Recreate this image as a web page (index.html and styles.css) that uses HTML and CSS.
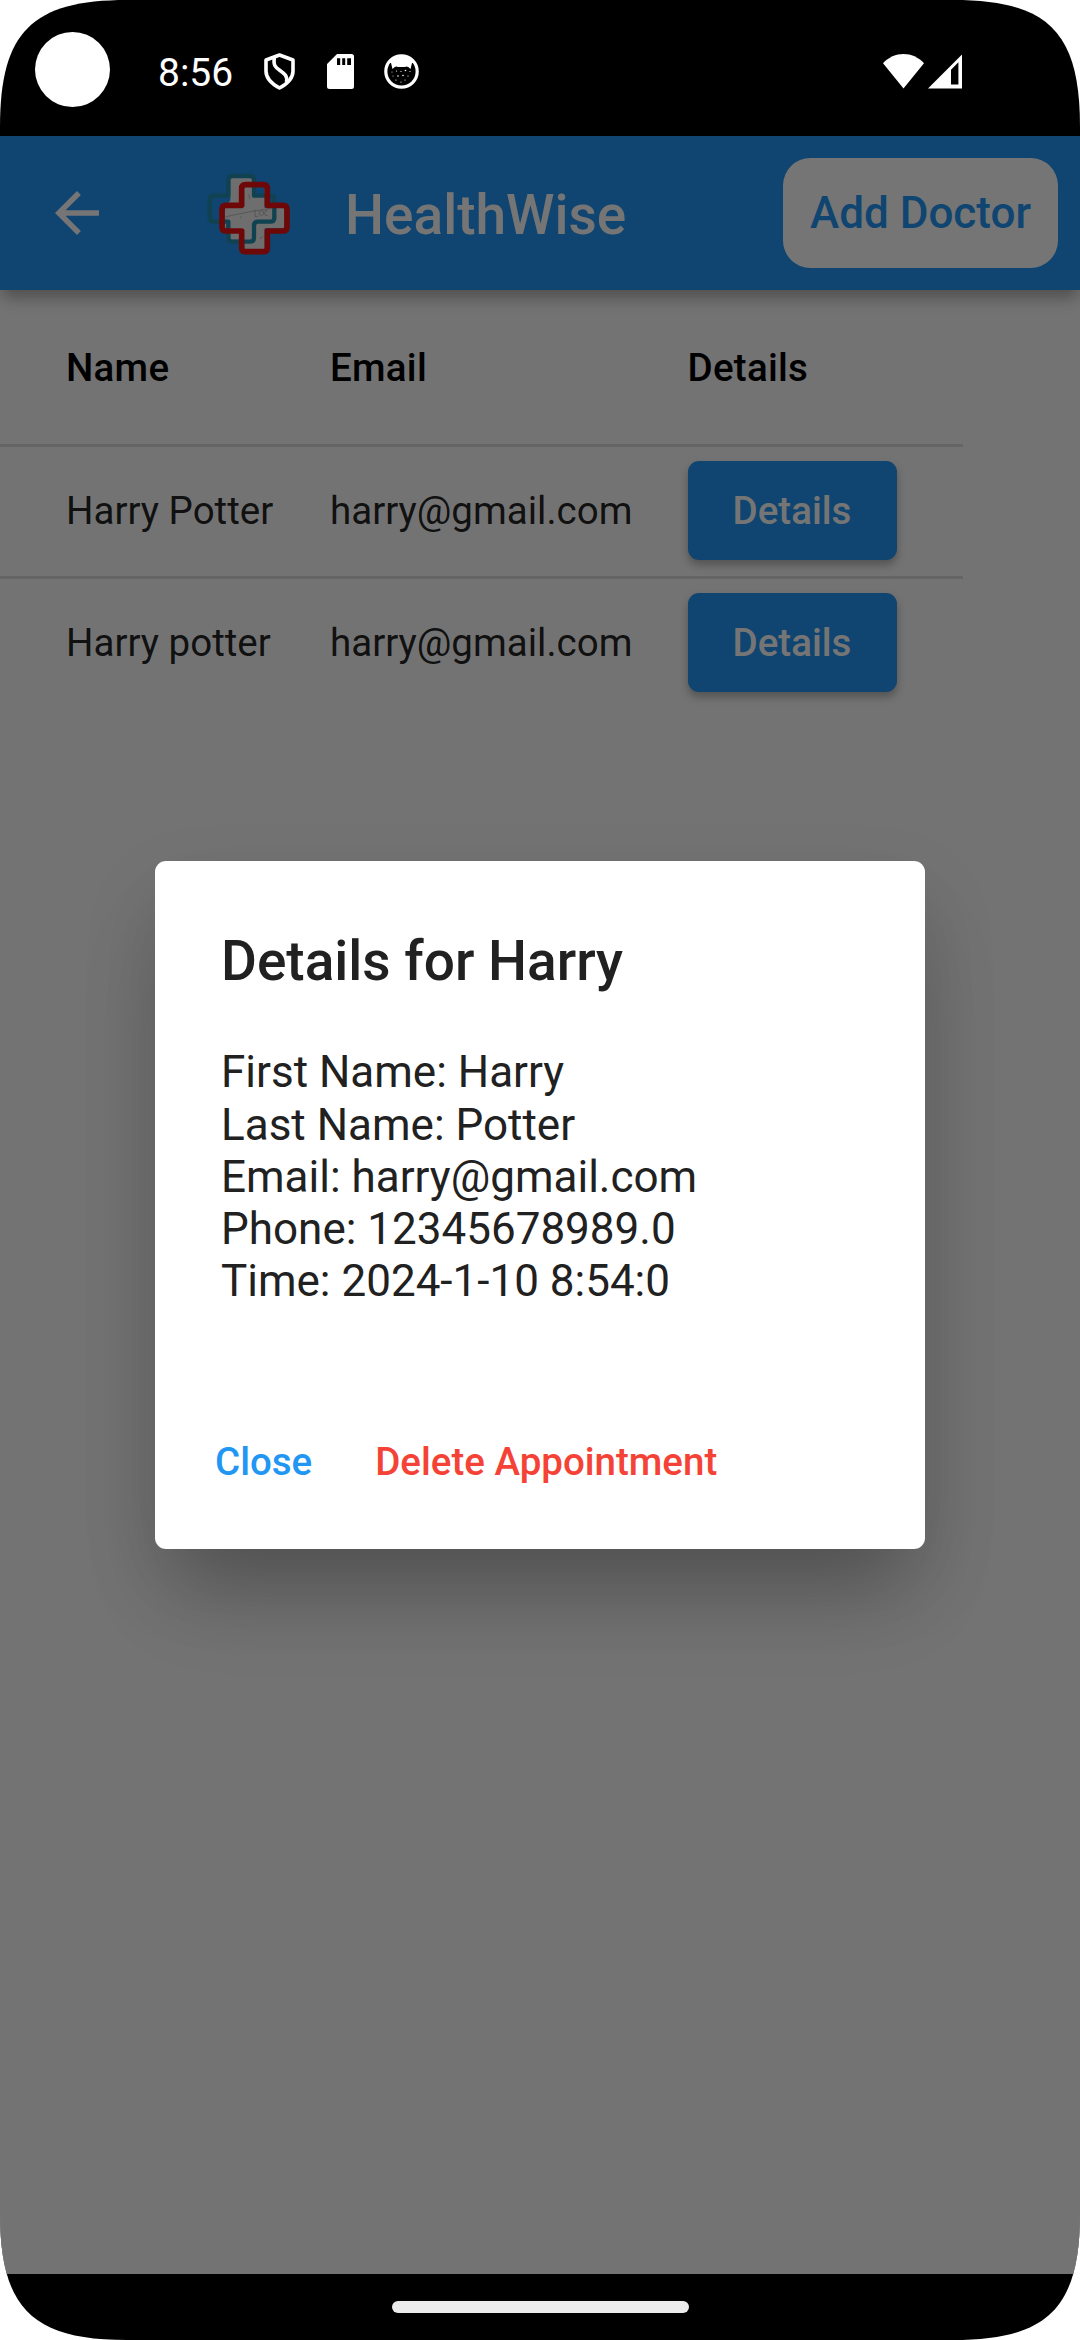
FILE: index.html
```html
<!DOCTYPE html>
<html lang="en">
<head>
<meta charset="utf-8">
<title>HealthWise</title>
<link rel="stylesheet" href="styles.css">
</head>
<body>
<div class="device">
  <header class="status">
    <span class="camera"></span>
    <time class="clock">8:56</time>
    <div class="notices">
      <svg class="shield" viewBox="0 0 31 37"><path d="M15.500 2L29 7V18C29 25 23 31 15.500 35C8 31 2 25 2 18V7Z" fill="none" stroke="#fff" stroke-width="3.600" stroke-linejoin="round"/><path d="M10.500 4C9 12 11 14 16 17.500C21 21 23.500 23 22.500 29" fill="none" stroke="#fff" stroke-width="3.600"/></svg>
      <svg class="card" viewBox="0 0 27 35"><path fill="#fff" fill-rule="evenodd" d="M10 0H24.500Q27 0 27 2.500V32.500Q27 35 24.500 35H2.500Q0 35 0 32.500V10ZM10 4.200V11H13.200V4.200ZM15.200 4.200V11H18.200V4.200ZM20.200 4.200V11H24V4.200Z"/></svg>
      <svg class="cat" viewBox="0 0 35 35"><circle cx="17.500" cy="17.500" r="15.700" fill="none" stroke="#fff" stroke-width="3.200"/><path fill="#fff" d="M4 9C8 1 27 1 31 9L28 9L26.500 15Q23 11.500 21 13H14Q12 11.500 8.500 15L7 9Z"/><g fill="#fff"><circle cx="8" cy="18" r=".5"/><circle cx="12.500" cy="17" r=".6"/><circle cx="17" cy="17.500" r=".6"/><circle cx="21.500" cy="16.500" r=".8"/><circle cx="26" cy="17.500" r=".6"/><circle cx="9" cy="22" r=".5"/><circle cx="14" cy="22" r=".8"/><circle cx="19" cy="21.500" r=".8"/><circle cx="24" cy="22" r=".6"/><circle cx="12" cy="26" r=".6"/><circle cx="17" cy="28" r=".6"/><circle cx="21" cy="26" r=".6"/></g></svg>
    </div>
    <div class="signals">
      <svg class="wifi" viewBox="0 0 41 35"><path fill="#fff" d="M0 9.300C11 -3.100 30 -3.100 41 9.300L20.500 34.500Z"/></svg>
      <svg class="cell" viewBox="0 0 35 35"><path fill="#fff" fill-rule="evenodd" d="M35 0V35H0ZM31.300 8L23.700 15.600V31H31.300Z"/></svg>
    </div>
  </header>

  <div class="app">
    <div class="appbar">
      <svg class="back" viewBox="0 0 24 24"><path fill="#fff" d="M20 11H7.830l5.590-5.590L12 4l-8 8 8 8 1.410-1.410L7.830 13H20v-2z"/></svg>
      <svg class="logo" viewBox="0 -22 300 300">
        <path fill="#f0f0f0" d="M91 23H156V50H194V113H253V174H194V236H133V208H91V174H74V113L91 90Z"/>
        <path fill="#2196f3" d="M166 50H194V72H166Z"/>
        <path class="cross cross-blue" d="M97 17H150Q162 17 162 29V76H211Q223 76 223 88V142Q223 154 211 154H174Q162 154 162 166V202Q162 214 150 214H97Q85 214 85 202V154H41Q29 154 29 142V88Q29 76 41 76H85V29Q85 17 97 17Z"/>
        <path class="sketch" d="M76 140Q120 128 214 114M146 72L150 86M165 118V138H174M203 120Q195 118 194 128Q194 138 203 136M120 138L125 142M180 205L190 198"/>
        <circle class="sketch" cx="184" cy="128" r="7"/>
        <path class="cross cross-red" d="M137 43H190Q202 43 202 55V105H249Q261 105 261 117V170Q261 182 249 182H202V232Q202 244 190 244H137Q125 244 125 232V182H78Q66 182 66 170V117Q66 105 78 105H125V55Q125 43 137 43Z"/>
      </svg>
      <h1 class="title">HealthWise</h1>
      <button class="add">Add Doctor</button>
    </div>

    <div class="table">
      <div class="row head"><span>Name</span><span>Email</span><span>Details</span></div>
      <div class="row"><span>Harry Potter</span><span>harry@gmail.com</span><button class="details">Details</button></div>
      <div class="row"><span>Harry potter</span><span>harry@gmail.com</span><button class="details">Details</button></div>
    </div>

    <div class="scrim">
      <section class="dialog">
        <h2 class="dialog-title">Details for Harry</h2>
        <div class="dialog-body">
          <p>First Name: Harry</p>
          <p>Last Name: Potter</p>
          <p>Email: harry@gmail.com</p>
          <p>Phone: 12345678989.0</p>
          <p>Time: 2024-1-10 8:54:0</p>
        </div>
        <div class="actions">
          <button class="action close">Close</button>
          <button class="action delete">Delete Appointment</button>
        </div>
      </section>
    </div>
  </div>

  <footer class="navbar"><span class="pill"></span></footer>
</div>
</body>
</html>
```

FILE: styles.css
```css
* { box-sizing: border-box; margin: 0; padding: 0; }

body {
  width: 1080px;
  height: 2340px;
  background: #fff;
  font-family: Roboto, sans-serif;
  overflow: hidden;
}

button { border: 0; font-family: inherit; white-space: nowrap; }
svg { display: block; flex: none; }

.device {
  width: 1080px;
  height: 2340px;
  display: flex;
  flex-direction: column;
  background: #000;
  clip-path: path("M0 127C0 32 32 0 127 0H953C1048 0 1080 32 1080 127V2213C1080 2308 1048 2340 953 2340H127C32 2340 0 2308 0 2213Z");
}

/* Status bar */
.status {
  height: 136px;
  flex: none;
  display: flex;
  align-items: center;
  padding: 7px 118px 0 35px;
}
.camera { width: 75px; height: 75px; margin-top: -4px; border-radius: 50%; background: #fff; }
.clock { width: 106px; margin-left: 48px; color: #fff; font-size: 39px; line-height: 46px; padding-top: 3px; }
.notices { display: flex; align-items: center; gap: 31px; }
.shield { width: 31px; height: 37px; }
.card { width: 27px; height: 35px; margin-left: 1px; }
.cat { width: 35px; height: 35px; margin-left: -1px; }
.signals { display: flex; align-items: center; gap: 4px; margin-left: auto; }
.wifi { width: 41px; height: 35px; }
.cell { width: 34px; height: 35px; }

/* Application area */
.app { position: relative; flex: 1; background: #fafafa; }

.appbar {
  position: relative;
  height: 154px;
  display: flex;
  align-items: center;
  padding: 0 22px 0 44px;
  background: #2196f3;
  box-shadow: 0 11px 14px -3px rgba(0, 0, 0, .26), 0 4px 20px rgba(0, 0, 0, .08);
}
.back { width: 66px; height: 66px; }
.logo { width: 100px; height: 100px; margin-left: 90px; }
.cross { fill: none; stroke-linejoin: round; }
.cross-blue { stroke: #2590b2; stroke-width: 13; }
.cross-red { stroke: #f01010; stroke-width: 17; }
.sketch { fill: none; stroke: #999; stroke-width: 3; opacity: .6; }
.title { margin-left: 45px; color: #fff; font-size: 55px; font-weight: 500; line-height: 64px; padding-top: 3px; }
.add {
  width: 275px;
  height: 110px;
  margin-left: auto;
  border-radius: 27.5px;
  background: #fff;
  color: #2196f3;
  font-size: 44px;
  font-weight: 500;
}

/* Data table */
.table { width: 963px; color: rgba(0, 0, 0, .87); font-size: 38.5px; }
.row {
  height: 132px;
  display: grid;
  grid-template-columns: 264px 357.5px 209px;
  align-items: center;
  padding-left: 66px;
  box-shadow: inset 0 3px #dcdcdc;
  white-space: nowrap;
}
.row.head { height: 154px; box-shadow: none; color: #000; font-weight: 500; letter-spacing: .275px; }
.details {
  height: 99px;
  border-radius: 11px;
  background: #2196f3;
  color: #fff;
  font-size: 38.5px;
  font-weight: 500;
  box-shadow: 0 5px 8px rgba(0, 0, 0, .28);
}

/* Modal dialog */
.scrim {
  position: absolute;
  inset: 0;
  display: flex;
  align-items: center;
  justify-content: center;
  background: rgba(0, 0, 0, .54);
}
.dialog {
  width: 770px;
  height: 687.5px;
  padding: 67px 60px 0 66px;
  border-radius: 11px;
  background: #fff;
  color: #212121;
  box-shadow: 0 58px 84px -22px rgba(0, 0, 0, .24), 0 32px 80px 0 rgba(0, 0, 0, .1);
}
.dialog-title { font-size: 55px; font-weight: 500; line-height: 66px; }
.dialog-body { margin-top: 52px; font-size: 44px; line-height: 52.25px; white-space: nowrap; }
.actions { display: flex; gap: 63px; margin: 131px 0 0 -6px; }
.action { background: none; font-size: 38.5px; font-weight: 500; line-height: 46px; }
.close { color: #2196f3; }
.delete { color: #f44336; }

/* Gesture bar */
.navbar { height: 66px; flex: none; display: flex; align-items: center; justify-content: center; }
.pill { width: 297px; height: 12px; border-radius: 6px; background: #ececec; }
```
